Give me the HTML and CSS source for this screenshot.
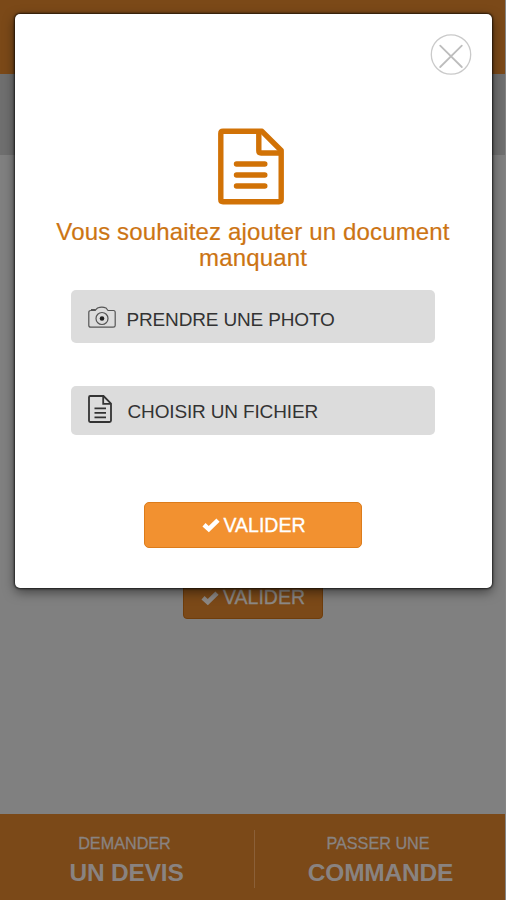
FILE: index.html
```html
<!DOCTYPE html>
<html lang="fr">
<head>
<meta charset="utf-8">
<title>Ajouter un document</title>
<link rel="stylesheet" href="styles.css">
</head>
<body>
<div class="app">
  <header class="topbar"></header>
  <div class="subbar"></div>
  <main class="page">
    <div class="page-button"><svg class="check" viewBox="0 0 18 14"><path d="M2 6.8 6.8 11.2 16 2.2"/></svg><span>VALIDER</span></div>
  </main>
  <footer class="footer">
    <div class="footer-item"><span class="small">DEMANDER</span><strong>UN DEVIS</strong></div>
    <div class="divider"></div>
    <div class="footer-item"><span class="small">PASSER UNE</span><strong>COMMANDE</strong></div>
  </footer>
</div>
<section class="modal" role="dialog">
  <button class="close" aria-label="Fermer"><svg viewBox="0 0 42 42"><circle cx="21" cy="20.5" r="19.7"/><path d="M10.2 11.7 31.8 33M31.8 11.7 10.2 33"/></svg></button>
  <svg class="document" viewBox="0 0 66 77"><path d="M5 3.3H44L63.2 22.5V71.5Q63.2 73.7 61 73.7H5Q2.8 73.7 2.8 71.5V5.5Q2.8 3.3 5 3.3Z"/><path d="M40.8 3.5V22.8Q40.8 25 43 25H62"/><path d="M18.5 36H46.8M18.5 47H46.8M18.5 58H46.8" stroke-linecap="round"/></svg>
  <h1>Vous souhaitez ajouter un document manquant</h1>
  <button class="choice photo"><svg class="camera" viewBox="0 0 28 23"><path d="M3 4.5H7L9.5 2Q14 .2 18 2L20 4.5H25.5Q27.2 4.5 27.2 6.5V19.5Q27.2 21.2 25.2 21.2H2.8Q.8 21.2 .8 19.5V6.5Q.8 4.5 3 4.5Z"/><path d="M3 4H7.5" stroke-width="2"/><circle cx="14" cy="12.5" r="6"/><circle class="pupil" cx="14" cy="12.5" r="2.3"/></svg><span>PRENDRE UNE PHOTO</span></button>
  <button class="choice file"><svg class="file-icon" viewBox="0 0 24 28"><path d="M2.2 1H15.5L23 8.5V25.5Q23 27 21.5 27H2.2Q1 27 1 25.8V2.2Q1 1 2.2 1Z"/><path d="M15.2 1.5V8.8H22.5"/><path d="M6.5 13.3H18M6.5 17.8H18M6.5 22.3H18"/></svg><span>CHOISIR UN FICHIER</span></button>
  <button class="submit"><svg class="check" viewBox="0 0 18 14"><path d="M2 6.8 6.8 11.2 16 2.2"/></svg><span>VALIDER</span></button>
</section>
</body>
</html>
```
FILE: styles.css
```css
* { box-sizing: border-box; }
body { margin: 0; font-family: "Liberation Sans", Arial, sans-serif; background: #858585; }
button { font-family: inherit; padding: 0; margin: 0; border: 0; }
svg { display: block; flex: none; fill: none; stroke: currentColor; }
.app { height: 900px; margin-right: 1px; display: flex; flex-direction: column; background: #808080; }
.topbar { height: 74px; background: #7b4918; }
.subbar { height: 81px; background: #6f6f6f; }
.page { flex: 1; padding-top: 417px; }
.page-button { width: 140px; height: 47px; margin-left: 183px; padding-top: 4px; display: flex; align-items: center; justify-content: center; gap: 4px; border: 1px solid #6f3d0b; border-radius: 4px; background: #7b4918; color: #8d8986; font-size: 19.5px; -webkit-text-stroke: .3px; }
.check { width: 18px; height: 14px; stroke-width: 4.6; overflow: visible; }
.footer { height: 86px; display: flex; background: #7b4918; color: #898381; }
.footer-item { flex: 1; display: flex; flex-direction: column; align-items: center; padding-top: 19px; }
.footer-item:first-child { flex: none; width: 254px; padding-right: 5px; }
.footer-item:first-child strong { padding-left: 4px; }
.small { font-size: 16.2px; line-height: 20px; white-space: nowrap; -webkit-text-stroke: .3px; }
.footer-item:last-child { padding-right: 4px; }
.footer-item:last-child strong { padding-left: 5px; }
strong { font-size: 24.5px; line-height: 28px; margin-top: 6px; letter-spacing: -.2px; }
.divider { width: 1px; height: 58px; margin-top: 16px; background: #8b6038; }
.modal { position: absolute; left: 15px; top: 14px; width: 477px; height: 574px; padding: 20px 21px 20px 19px; border-radius: 5px; background: #fff; box-shadow: 0 0 2px 1px rgba(0,0,0,.65), 0 4px 12px rgba(0,0,0,.5); display: flex; flex-direction: column; align-items: center; }
.close { align-self: flex-end; width: 42px; height: 42px; margin-right: -1px; background: none; color: #bdbdbd; }
.close svg { width: 42px; height: 42px; }
.close circle { stroke: #cacaca; stroke-width: 1.3; }
.close path { stroke-width: 1.8; stroke-linecap: round; }
.document { width: 66px; height: 77px; margin: 52px 3px 0 0; color: #d17206; stroke-width: 5.4; stroke-linejoin: round; }
h1 { width: 410px; margin: 14px 0 0 1px; color: #cc7413; font-size: 24px; font-weight: 400; line-height: 26px; letter-spacing: .15px; text-align: center; -webkit-text-stroke: .2px; }
.choice { width: 364px; display: flex; align-items: center; padding-left: 17px; border-radius: 5px; background: #dcdcdc; color: #333; font-size: 19px; letter-spacing: -.15px; }
.photo { height: 53px; margin-top: 19px; }
.file { height: 49px; margin-top: 43px; }
.camera { width: 28px; height: 23px; margin: 1px 11px 0 0; stroke-width: 1.2; color: #555; }
.camera .pupil { fill: #222; stroke: none; }
.file-icon { width: 24px; height: 28px; margin: 0 16px 3px 0; stroke-width: 1.8; }
.choice span { padding-top: 3px; }
.photo span { padding-top: 6px; }
.submit { width: 218px; height: 46px; margin-top: 67px; padding-left: 2px; display: flex; align-items: center; justify-content: center; gap: 4px; border: 1px solid #dc7c1b; border-radius: 5px; background: #f29130; color: #fff; font-size: 19.5px; -webkit-text-stroke: .3px; }
```
